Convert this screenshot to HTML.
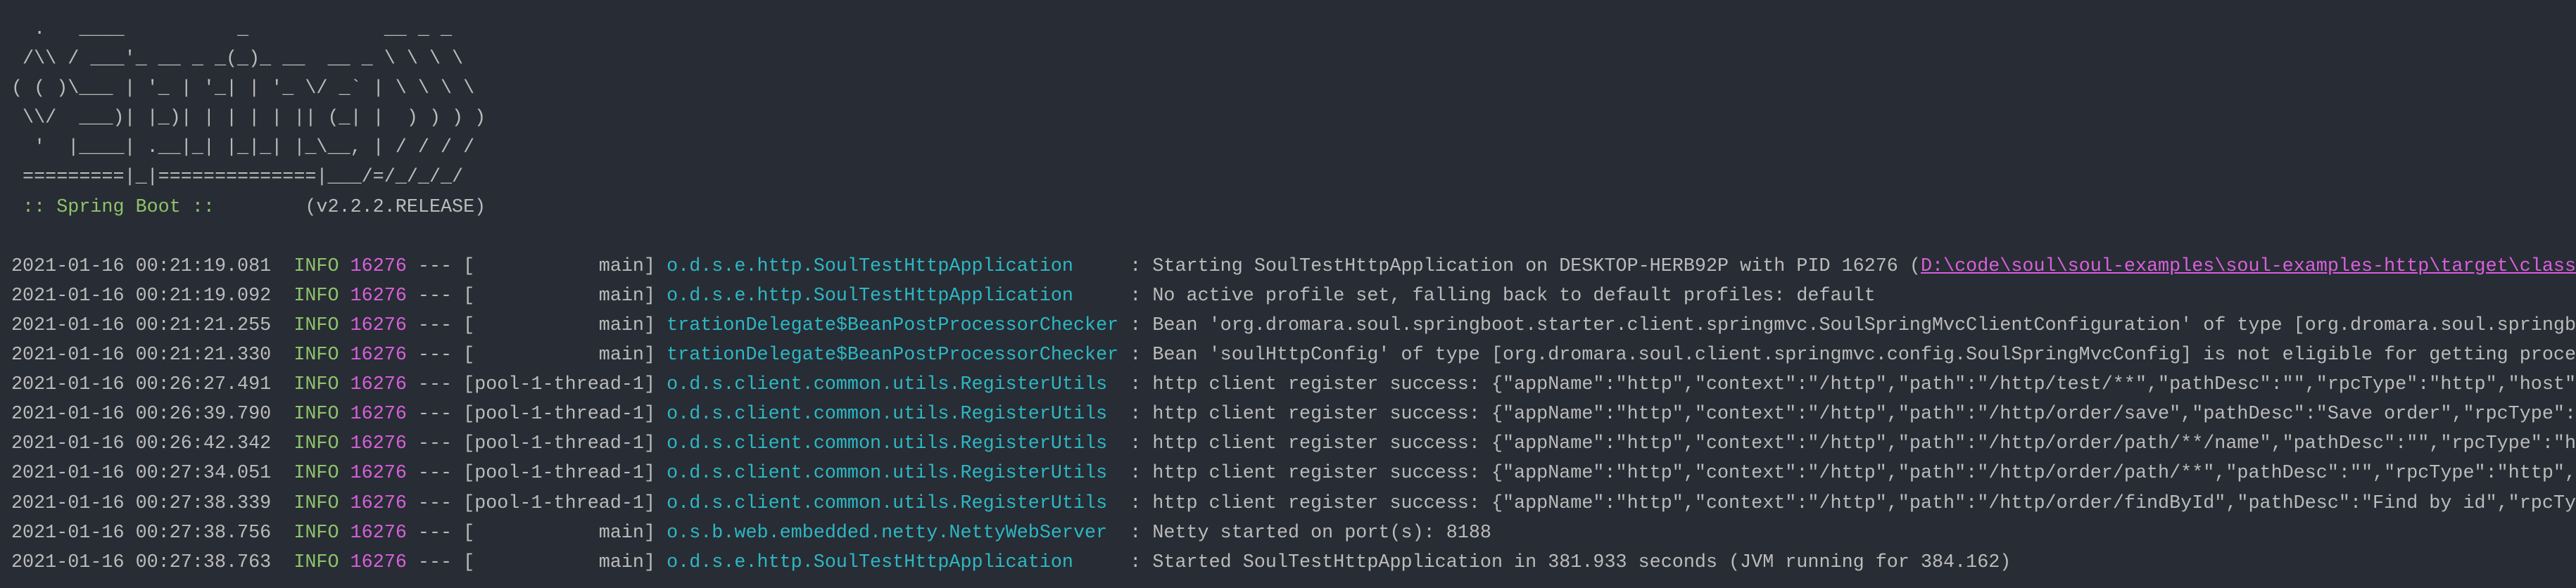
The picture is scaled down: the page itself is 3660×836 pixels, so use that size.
<!DOCTYPE html>
<html><head><meta charset="utf-8"><style>
html,body{margin:0;padding:0;background:#282c34;width:3660px;height:836px;overflow:hidden}
pre{margin:0;padding:21px 0 0 16px;font-family:"Liberation Mono",monospace;font-size:26.75px;line-height:42.1px;color:#bbbbbb;white-space:pre;overflow:hidden;width:3644px}
.g{color:#8dc46a}.m{color:#d860dd}.c{color:#2cb8c4}.l{color:#d860dd;text-decoration:underline}
</style></head><body><pre>  .   ____          _            __ _ _
 /\\ / ___'_ __ _ _(_)_ __  __ _ \ \ \ \
( ( )\___ | '_ | '_| | '_ \/ _` | \ \ \ \
 \\/  ___)| |_)| | | | | || (_| |  ) ) ) )
  '  |____| .__|_| |_|_| |_\__, | / / / /
 =========|_|==============|___/=/_/_/_/
<span class="g"> :: Spring Boot :: </span>       (v2.2.2.RELEASE)

2021-01-16 00:21:19.081  <span class="g">INFO</span> <span class="m">16276</span> --- [           main] <span class="c">o.d.s.e.http.SoulTestHttpApplication    </span> : Starting SoulTestHttpApplication on DESKTOP-HERB92P with PID 16276 (<span class="l">D:\code\soul\soul-examples\soul-examples-http\target\classes</span> started by herb in D:\code\soul)
2021-01-16 00:21:19.092  <span class="g">INFO</span> <span class="m">16276</span> --- [           main] <span class="c">o.d.s.e.http.SoulTestHttpApplication    </span> : No active profile set, falling back to default profiles: default
2021-01-16 00:21:21.255  <span class="g">INFO</span> <span class="m">16276</span> --- [           main] <span class="c">trationDelegate$BeanPostProcessorChecker</span> : Bean 'org.dromara.soul.springboot.starter.client.springmvc.SoulSpringMvcClientConfiguration' of type [org.dromara.soul.springboot.starter.client.springmvc.SoulSpringMvcClientConfiguration]
2021-01-16 00:21:21.330  <span class="g">INFO</span> <span class="m">16276</span> --- [           main] <span class="c">trationDelegate$BeanPostProcessorChecker</span> : Bean 'soulHttpConfig' of type [org.dromara.soul.client.springmvc.config.SoulSpringMvcConfig] is not eligible for getting processed by all BeanPostProcessors
2021-01-16 00:26:27.491  <span class="g">INFO</span> <span class="m">16276</span> --- [pool-1-thread-1] <span class="c">o.d.s.client.common.utils.RegisterUtils </span> : http client register success: {"appName":"http","context":"/http","path":"/http/test/**","pathDesc":"","rpcType":"http","host":"192.168.1.1"}
2021-01-16 00:26:39.790  <span class="g">INFO</span> <span class="m">16276</span> --- [pool-1-thread-1] <span class="c">o.d.s.client.common.utils.RegisterUtils </span> : http client register success: {"appName":"http","context":"/http","path":"/http/order/save","pathDesc":"Save order","rpcType":"http","host":"192.168.1.1"}
2021-01-16 00:26:42.342  <span class="g">INFO</span> <span class="m">16276</span> --- [pool-1-thread-1] <span class="c">o.d.s.client.common.utils.RegisterUtils </span> : http client register success: {"appName":"http","context":"/http","path":"/http/order/path/**/name","pathDesc":"","rpcType":"http","host":"192.168.1.1"}
2021-01-16 00:27:34.051  <span class="g">INFO</span> <span class="m">16276</span> --- [pool-1-thread-1] <span class="c">o.d.s.client.common.utils.RegisterUtils </span> : http client register success: {"appName":"http","context":"/http","path":"/http/order/path/**","pathDesc":"","rpcType":"http","host":"192.168.1.1"}
2021-01-16 00:27:38.339  <span class="g">INFO</span> <span class="m">16276</span> --- [pool-1-thread-1] <span class="c">o.d.s.client.common.utils.RegisterUtils </span> : http client register success: {"appName":"http","context":"/http","path":"/http/order/findById","pathDesc":"Find by id","rpcType":"http","host":"192.168.1.1"}
2021-01-16 00:27:38.756  <span class="g">INFO</span> <span class="m">16276</span> --- [           main] <span class="c">o.s.b.web.embedded.netty.NettyWebServer </span> : Netty started on port(s): 8188
2021-01-16 00:27:38.763  <span class="g">INFO</span> <span class="m">16276</span> --- [           main] <span class="c">o.d.s.e.http.SoulTestHttpApplication    </span> : Started SoulTestHttpApplication in 381.933 seconds (JVM running for 384.162)
</pre></body></html>
